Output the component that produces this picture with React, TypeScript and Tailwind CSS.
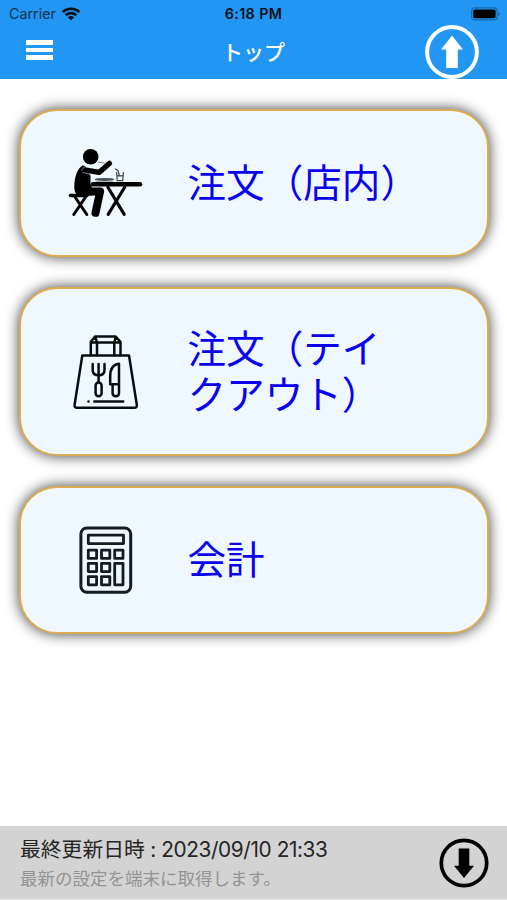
import type { ReactNode } from 'react';

interface MenuCardProps {
  icon: ReactNode;
  label: string;
  className: string;
}

function WifiIcon() {
  return (
    <svg className="h-[14px] w-[20px]" viewBox="0 0 20 14" fill="none" stroke="#061018" strokeWidth="2.7">
      <path d="M1.7 5.1C6.3.6 13.7.6 18.3 5.1" />
      <path d="M4.7 8.3C7.6 5.5 12.4 5.5 15.3 8.3" />
      <path d="M10 13.4 6.9 10.2C8.7 8.7 11.3 8.7 13.1 10.2Z" fill="#061018" stroke="none" />
    </svg>
  );
}

function BatteryIcon() {
  return (
    <svg className="h-[14px] w-[30px]" viewBox="0 0 30 14">
      <rect x=".6" y=".9" width="25.6" height="12" rx="3.4" fill="none" stroke="#1769ab" strokeWidth="1.2" />
      <rect x="2.2" y="2.5" width="22.4" height="8.8" rx="1.8" fill="#000" />
      <path d="M27.4 4.8C29.6 5.7 29.6 8.1 27.4 9Z" fill="#1769ab" />
    </svg>
  );
}

function DiningIcon() {
  return (
    <svg className="h-[70px] w-[76px]" viewBox="68 148 76 70" fill="none" stroke="#000" strokeLinecap="round" strokeLinejoin="round">
      <circle cx="90.7" cy="156.7" r="7.8" fill="#000" stroke="none" />
      <path d="M83 165.2C77.6 168 74.7 176 74.3 186C74 191.5 76 195.5 80 195.5H92V187L90.5 184.5V176L86 167Z" fill="#000" stroke="none" />
      <path d="M86 170.2 99 172.4 109.4 163.4" strokeWidth="5.3" />
      <path d="M81.7 170.5C82.3 167.4 85.4 166.1 88.2 167.4M82.8 172.4 91.2 174.8" stroke="#aeb5bb" strokeWidth=".7" />
      <path d="M98 162.2 105.5 163.2" stroke="#858b90" strokeWidth="1" />
      <path d="M80 191.5H100.1L95.5 212.8" strokeWidth="8" />
      <path d="M93 184.3H140" strokeWidth="4.5" />
      <path d="M70.5 195.4H87" strokeWidth="3.5" />
      <path d="M75 197 86.8 214.5M85.6 197 73.8 214.5" strokeWidth="3" />
      <path d="M107.8 187 124.2 214.4M124.8 187 108.2 214.4" strokeWidth="3.1" />
      <ellipse cx="104.5" cy="179.4" rx="9.8" ry="1.5" fill="#4b5053" stroke="none" />
      <path d="M96 181.4H113" stroke="#8e9599" strokeWidth=".8" />
      <path d="M116.6 172.5 117.2 180.7H122.7L123.4 172.5M117 175.8H123M119.2 175 118 170.7 115.5 169" stroke="#3b4043" strokeWidth="1.2" />
    </svg>
  );
}

function TakeoutIcon() {
  return (
    <svg className="h-[76px] w-[68px]" viewBox="72 333 68 76" fill="none" stroke="#080d10" strokeWidth="2.5" strokeLinecap="round" strokeLinejoin="round">
      <path d="M82.3 354.4H129L136.8 403.8C137 405.7 136.2 406.7 134.5 406.7H76.9C75.2 406.7 74.3 405.7 74.6 403.8Z" />
      <path d="M90.8 354V340.8L95.3 335.4H115.4L120.5 340.8V354M90.8 341.5H120.5M97 354V342L95.5 336M114.3 354V342L115.6 336" />
      <path d="M92.7 363V369C92.7 372.6 95 374.3 98.6 374.3S104.5 372.6 104.5 369V363M98.6 363V380.5" />
      <rect x="95.6" y="381.5" width="6" height="13.7" rx="3" />
      <path d="M119 362.8C113.4 363.5 110.2 368 110.2 375.2V383.3H119Z" />
      <path d="M112.6 384V392C112.6 394 113.9 395.2 115.8 395.2S119 394 119 392V384" />
      <path d="M94.4 400.6H123.2M88.5 400.6H88.6" />
    </svg>
  );
}

function CalculatorIcon() {
  return (
    <svg className="h-[68px] w-[54px]" viewBox="79 526 54 68" fill="none" stroke="#161b1e" strokeWidth="2.8" strokeLinejoin="round">
      <rect x="80.9" y="528" width="49.8" height="64.2" rx="6" strokeWidth="3" />
      <rect x="88.3" y="535.2" width="35.2" height="8.4" />
      <rect x="88.3" y="550.2" width="8.3" height="8.2" />
      <rect x="101.5" y="550.2" width="8.3" height="8.2" />
      <rect x="114.7" y="550.2" width="8.3" height="8.2" />
      <rect x="88.3" y="563.4" width="8.3" height="8.2" />
      <rect x="101.5" y="563.4" width="8.3" height="8.2" />
      <rect x="88.3" y="576.6" width="8.3" height="8.2" />
      <rect x="101.5" y="576.6" width="8.3" height="8.2" />
      <rect x="114.7" y="563.4" width="8.3" height="21.4" />
    </svg>
  );
}

function MenuCard({ icon, label, className }: MenuCardProps) {
  return (
    <button
      type="button"
      className={`flex w-full items-center rounded-[38px] border-2 border-[#dbac50] bg-[#f0f8ff] text-left shadow-[0_0_14px_0_rgba(0,0,0,0.75)] ${className}`}
    >
      <span className="ml-[29px] flex w-[112px] shrink-0 justify-center">{icon}</span>
      <span className="ml-[26px] w-[215px] text-[38.6px] leading-[46px] text-[#0a00f0]">{label}</span>
    </button>
  );
}

export default function App() {
  return (
    <div lang="ja" className="flex h-[900px] w-[507px] flex-col overflow-hidden bg-white font-['Inter','Noto_Sans_CJK_JP',sans-serif]">
      <header className="h-[79px] shrink-0 bg-[#2196f3]">
        <div className="grid h-[25px] grid-cols-3 items-center pt-[2px] text-[14.3px] leading-[20px] text-[#061018]">
          <div className="flex items-center gap-[5px] pl-[9px]">
            <span className="text-[#12344f]">Carrier</span>
            <WifiIcon />
          </div>
          <div className="text-center font-semibold tracking-[0.4px]">6:18 PM</div>
          <div className="flex justify-end pr-[6px]">
            <BatteryIcon />
          </div>
        </div>
        <div className="grid h-[54px] grid-cols-3 items-center">
          <button type="button" aria-label="メニュー" className="mb-[4px] ml-[26px] flex w-[27px] flex-col gap-[3px]">
            <span className="h-[4.5px] bg-white" />
            <span className="h-[4.5px] bg-white" />
            <span className="h-[4.5px] bg-white" />
          </button>
          <h1 className="pt-px text-center text-[21px] font-medium leading-[30px] text-white">トップ</h1>
          <button type="button" aria-label="送信" className="mr-[28px] justify-self-end">
            <svg className="h-[54px] w-[54px]" viewBox="0 0 54 54">
              <circle cx="27" cy="27" r="24.9" fill="none" stroke="#fff" strokeWidth="4" />
              <path d="M27 10.5 38 24.5H32.8V43H21.2V24.5H16Z" fill="#fff" />
            </svg>
          </button>
        </div>
      </header>

      <main className="flex flex-1 flex-col gap-[30px] px-[18.5px] pt-[30px]">
        <MenuCard icon={<DiningIcon />} label="注文（店内）" className="h-[148px]" />
        <MenuCard icon={<TakeoutIcon />} label="注文（テイクアウト）" className="h-[169px]" />
        <MenuCard icon={<CalculatorIcon />} label="会計" className="h-[148px]" />
      </main>

      <footer className="flex h-[74px] shrink-0 items-center justify-between border-b border-[#e9e9e9] bg-[#d3d3d3] pl-[20px] pr-[18px]">
        <div className="pt-[2px]">
          <p className="text-[20.8px] leading-[30px] text-[#252525]">
            最終更新日時<span className="tracking-[-0.4px]"> : 2023/09/10 21:33</span>
          </p>
          <p className="text-[17.5px] leading-[28px] text-[#939393]">最新の設定を端末に取得します。</p>
        </div>
        <button type="button" aria-label="更新">
          <svg className="h-[50px] w-[50px]" viewBox="0 0 50 50">
            <circle cx="25" cy="25" r="22.7" fill="none" stroke="#000" strokeWidth="3.7" />
            <path d="M25 40 15 27.7H19.7V10.6H30.3V27.7H35Z" fill="#000" />
          </svg>
        </button>
      </footer>
    </div>
  );
}
